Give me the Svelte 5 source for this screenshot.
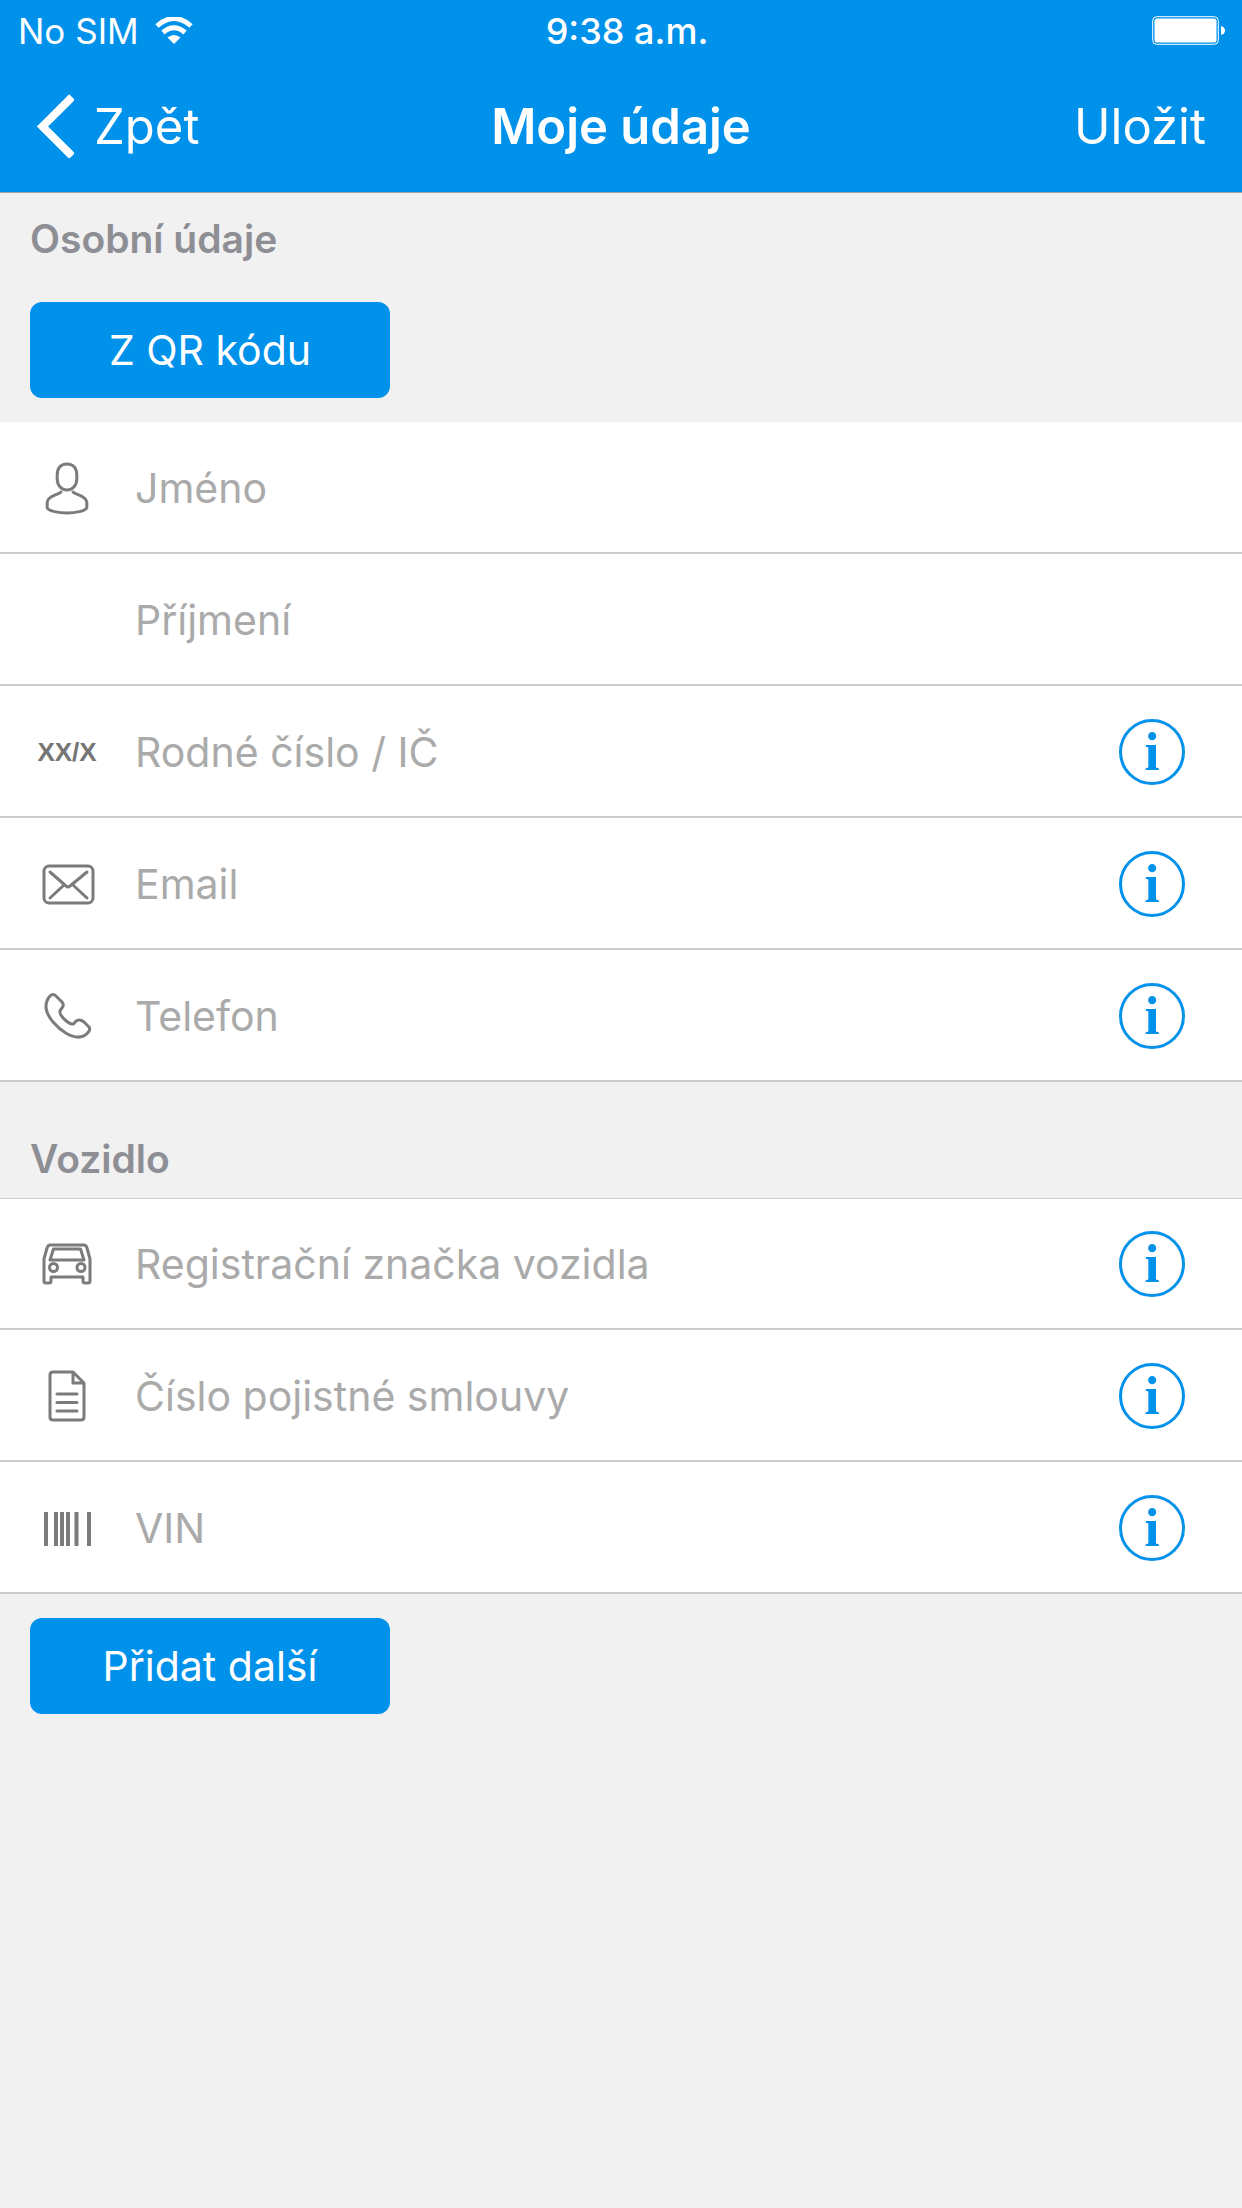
<script lang="ts">
  type Field = {
    id: string;
    label: string;
    icon: string;
    type?: string;
    info?: boolean;
  };

  const personFields: Field[] = [
    { id: "first-name", label: "Jméno", icon: "person" },
    { id: "last-name", label: "Příjmení", icon: "" },
    { id: "birth-number", label: "Rodné číslo / IČ", icon: "number", info: true },
    { id: "email", label: "Email", icon: "mail", type: "email", info: true },
    { id: "phone", label: "Telefon", icon: "phone", type: "tel", info: true },
  ];

  const vehicleFields: Field[] = [
    { id: "plate", label: "Registrační značka vozidla", icon: "car", info: true },
    { id: "policy", label: "Číslo pojistné smlouvy", icon: "document", info: true },
    { id: "vin", label: "VIN", icon: "barcode", info: true },
  ];

  let values: Record<string, string> = $state({});
</script>

{#snippet row(field: Field)}
  <div class="row">
    <label class="icon" for={field.id} aria-label={field.label}>
      {#if field.icon === "number"}
        <span class="number">XX/X</span>
      {:else if field.icon}
        <svg viewBox="0 0 74 74" aria-hidden="true">
          {#if field.icon === "person"}
            <path d="M37 13c-6.500 0-9.800 4.500-9.800 11v4c0 6 4 11 9.800 11s9.800-5 9.800-11v-4c0-6.500-3.300-11-9.800-11z" />
            <path d="M31 41c-3 3-13 3.500-13.800 10v6c2 3 11 5 19.800 5s17.800-2 19.800-5v-6c-.8-6.500-10.800-7-13.800-10" />
          {:else if field.icon === "mail"}
            <rect x="14" y="19" width="49" height="37" rx="5" />
            <path d="M20 25l16 14q2 2 4 0l17-14M20 51l14-13M57 51L43 38" />
          {:else if field.icon === "phone"}
            <path d="M20 17q3-3 6 0l6 6q2.500 3 0 6l-1.500 2c-3 4 8 15 13 14l2.500-3q4-2.500 8 1l5 5q1.500 2-.5 5c-5 6-13 6.500-22 1.500C27 49 17 38 16 29q-.5-7 4-12z" />
          {:else if field.icon === "car"}
            <path d="M20 18h34q2 0 3 3l3 11v22q0 2-2 2h-3q-2 0-2-2v-4H21v4q0 2-2 2h-3q-2 0-2-2V32l3-11q1-3 3-3z" />
            <path d="M23.500 22h27l3.500 11H20z" />
            <circle cx="23.500" cy="40.500" r="4" />
            <circle cx="51" cy="40.500" r="4" />
          {:else if field.icon === "document"}
            <path d="M23 13h20l11 11v34q0 3-3 3H23q-3 0-3-3V16q0-3 3-3zM43 13v11h11" />
            <path d="M27 35h20M27 43.500h20M27 52h20" />
          {:else if field.icon === "barcode"}
            <path class="bars" d="M16 21v34M26 21v34M32 21v34M38 21v34M46.500 21v34M59 21v34" />
          {/if}
        </svg>
      {/if}
    </label>
    <input
      id={field.id}
      type={field.type ?? "text"}
      placeholder={field.label}
      bind:value={values[field.id]}
    />
    {#if field.info}
      <button class="info" aria-label="Informace: {field.label}">i</button>
    {/if}
  </div>
{/snippet}

<header>
  <div class="status">
    <div class="carrier">
      <span>No SIM</span>
      <svg class="wifi" viewBox="0 0 38 28" aria-hidden="true">
        <path d="M2 9Q19-6 36 9" />
        <path d="M8 15.500Q19 6 30 15.500" />
        <path class="dot" d="M12.500 20.500Q19 15.500 25.500 20.500L19 27z" />
      </svg>
    </div>
    <span class="time">9:38 a.m.</span>
    <svg class="battery" viewBox="0 0 84 30" aria-hidden="true">
      <rect class="shell" x=".7" y=".7" width="65.600" height="27.600" rx="4" />
      <rect x="2.500" y="2.500" width="62" height="24" rx="2.500" />
      <path d="M69 10q4 1 4 4.500t-4 4.500z" />
    </svg>
  </div>
  <nav>
    <button class="nav-button back">
      <svg viewBox="0 0 38 64" aria-hidden="true">
        <path d="M36 3L6.500 32.500l29.500 29.500" />
      </svg>
      Zpět
    </button>
    <h1>Moje údaje</h1>
    <button class="nav-button save">Uložit</button>
  </nav>
</header>

<main>
  <section>
    <h2>Osobní údaje</h2>
    <button class="action">Z QR kódu</button>
    <div class="rows">
      {#each personFields as field (field.id)}
        {@render row(field)}
      {/each}
    </div>
  </section>

  <section class="vehicle">
    <h2>Vozidlo</h2>
    <div class="rows">
      {#each vehicleFields as field (field.id)}
        {@render row(field)}
      {/each}
    </div>
    <button class="action">Přidat další</button>
  </section>
</main>

<style>
  :global(body) {
    background: #f1f1f1;
    font-family: Inter, "Liberation Sans", sans-serif;
  }

  button {
    border: none;
    padding: 0;
    background: none;
    font-family: inherit;
    cursor: pointer;
  }

  header {
    background: #0091eb;
    color: white;
    border-bottom: 1px solid #a5a5a5;
  }

  .status {
    display: grid;
    grid-template-columns: 1fr auto 1fr;
    align-items: center;
    height: 62px;
    padding: 0 6px 0 18px;
    font-size: 35px;
  }

  .carrier {
    display: flex;
    align-items: center;
    gap: 16px;
  }

  .time {
    font-size: 36px;
    font-weight: 500;
  }

  .wifi {
    width: 38px;
    height: 28px;
    fill: none;
    stroke: white;
    stroke-width: 5;
  }

  .wifi .dot {
    fill: white;
    stroke: none;
  }

  .battery {
    justify-self: end;
    width: 84px;
    height: 30px;
    fill: white;
  }

  .battery .shell {
    fill: none;
    stroke: white;
    stroke-width: 1;
  }

  nav {
    display: grid;
    grid-template-columns: 1fr auto 1fr;
    align-items: center;
    height: 128px;
    padding: 0 36px 2px;
  }

  h1 {
    margin: 0;
    font-size: 49px;
    font-weight: 600;
  }

  .nav-button {
    color: white;
    font-size: 49px;
  }

  .back {
    display: flex;
    align-items: center;
    gap: 20px;
    justify-self: start;
  }

  .back svg {
    width: 38px;
    height: 64px;
    fill: none;
    stroke: white;
    stroke-width: 8;
  }

  .save {
    justify-self: end;
  }

  h2 {
    margin: 0;
    padding: 23px 30px 16px;
    color: #8e8e95;
    font-size: 39px;
    font-weight: 600;
    line-height: 46px;
  }

  .action {
    display: block;
    width: 360px;
    height: 96px;
    margin: 24px 30px;
    border-radius: 12px;
    background: #0091eb;
    color: white;
    font-size: 41px;
  }

  .rows {
    background: white;
  }

  .row {
    display: flex;
    align-items: center;
    height: 128px;
    padding: 2px 57px 0 30px;
    border-bottom: 2px solid #cbcbcb;
  }

  .icon {
    display: flex;
    align-items: center;
    justify-content: center;
    width: 74px;
    height: 74px;
    margin-right: 31px;
  }

  .icon svg {
    width: 74px;
    height: 74px;
    fill: none;
    stroke: #7b7b7b;
    stroke-width: 3;
    stroke-linecap: round;
    stroke-linejoin: round;
  }

  .icon .bars {
    stroke-width: 4;
    stroke-linecap: butt;
  }

  .number {
    color: #757575;
    font: bold 26px "Liberation Sans", sans-serif;
  }

  input {
    flex: 1;
    min-width: 0;
    border: none;
    outline: none;
    padding: 0;
    background: none;
    color: #333;
    font-family: inherit;
    font-size: 41px;
    line-height: 52px;
  }

  input::placeholder {
    color: #aaa;
    opacity: 1;
  }

  .info {
    box-sizing: border-box;
    width: 66px;
    height: 66px;
    border: 3px solid #0091eb;
    border-radius: 50%;
    color: #0091eb;
    font: bold 54px / 60px "Liberation Serif", serif;
  }

  .vehicle h2 {
    padding-top: 54px;
  }

  .vehicle .rows {
    box-shadow: inset 0 1px #cbcbcb;
  }
</style>
